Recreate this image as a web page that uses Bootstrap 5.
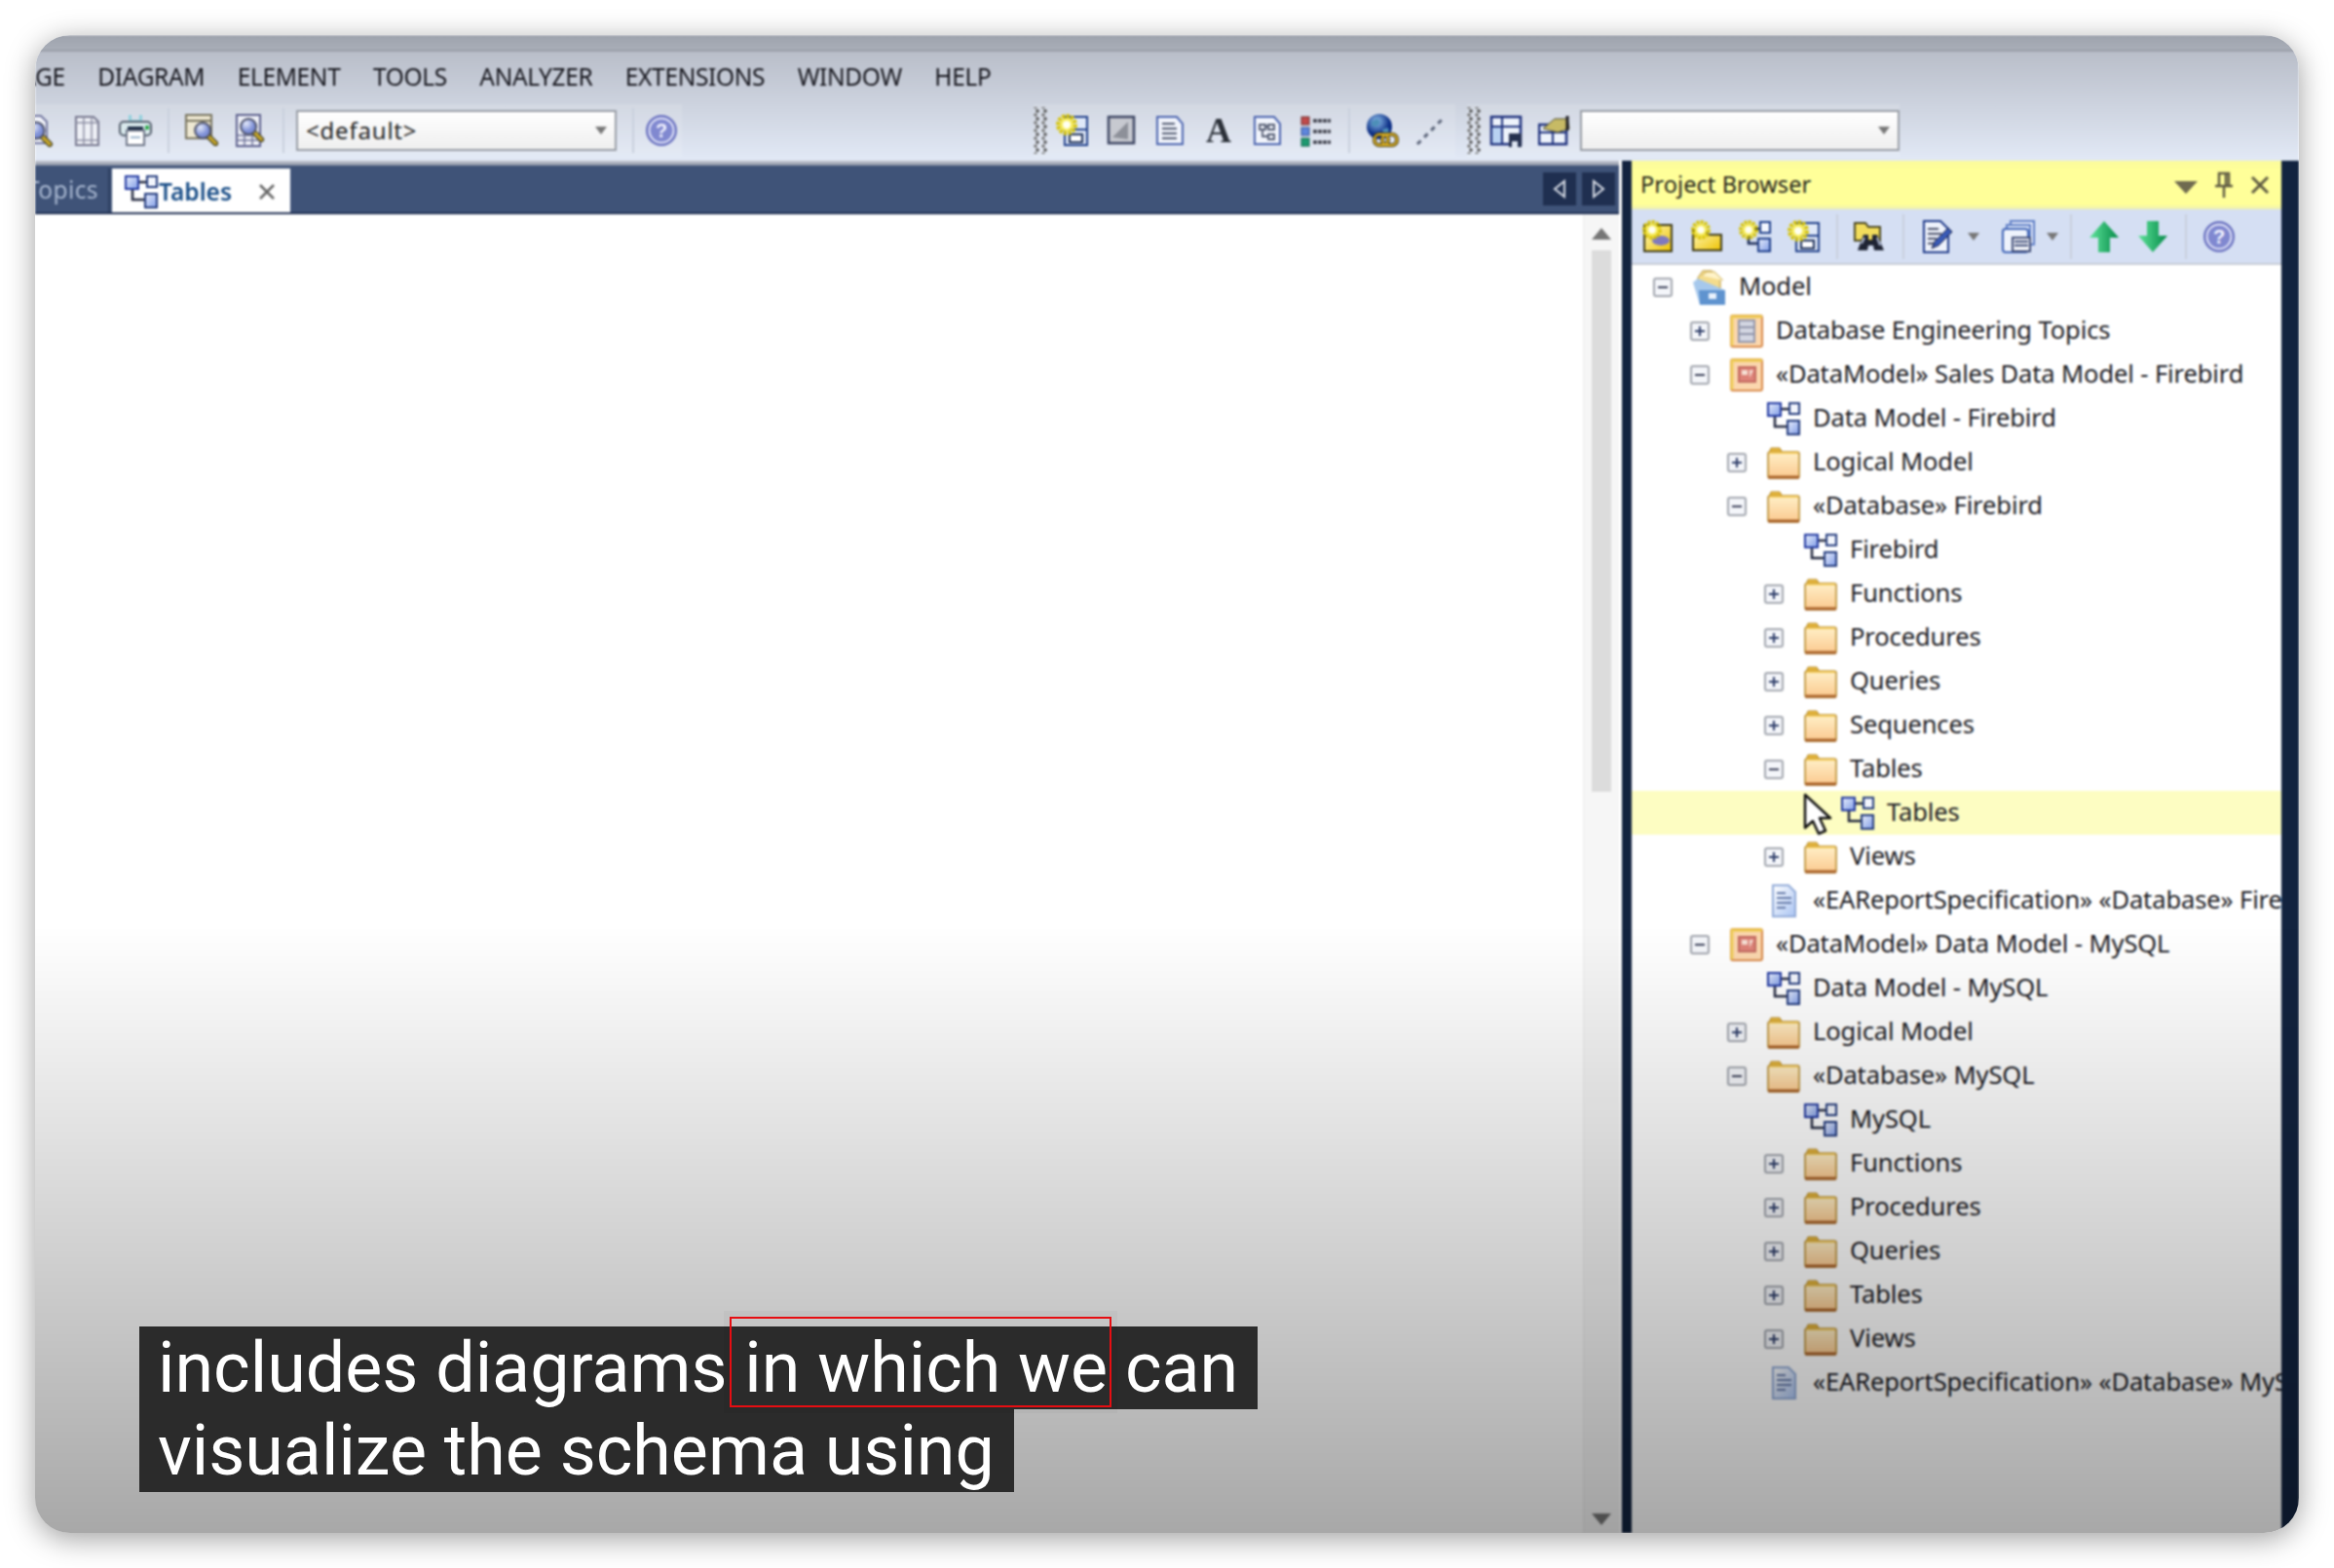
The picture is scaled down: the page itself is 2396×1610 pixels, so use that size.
<!DOCTYPE html>
<html lang="en">
<head>
  <meta charset="UTF-8">
  <title>Project Browser</title>
  <link href="https://cdn.jsdelivr.net/npm/bootstrap@5.3.2/dist/css/bootstrap.min.css" rel="stylesheet">
  <style>
    html, body { height: 1610px; background: #fff; overflow: hidden; }
    .shot-frame { padding: 36px; height: 1610px; }
    .app-window { width: 2324px; height: 1538px; border-radius: 36px; overflow: hidden; background: #fff;
      box-shadow: 0 6px 30px rgba(0,0,0,.38); }
    .app-ui { height: 100%; filter: blur(.8px); font-family: "Noto Sans", sans-serif; color: #1a1a22; }

    .title-strip { height: 17px; background: linear-gradient(#9ea3ad, #a9aeb8); border-bottom: 2px solid #9a9ea8; }
    .chrome { height: 112px; background: linear-gradient(#b9bec9, #e2e9f6); }
    .menu-row { height: 53px; gap: 33.5px; font-size: 24.5px; letter-spacing: -.35px; margin-left: -28px; color: #15151c; white-space: nowrap; overflow: hidden; }
    .tool-row { height: 55px; }
    .tb-band { gap: 16px; height: 54px; background: rgba(255,255,255,.12); }
    .tb-band1 { margin-left: -14px; padding-right: 4px; }
    .tb-band2 { margin-left: 361px; padding-right: 8px; }
    .tb-band3 { margin-left: 12px; }
    .tb-ico { width: 34px; height: 34px; flex: none; }
    .tb-sep { width: 2px; height: 46px; background: #c9d0dd; flex: none; }
    .tb-grip { width: 14px; height: 48px; flex: none; margin-right: -7px;
      background: radial-gradient(circle, #555 0 1.4px, transparent 2px) 0 0 / 8px 8px,
                  radial-gradient(circle, #777 0 1.4px, transparent 2px) 6px 4px / 8px 8px; }
    .tb-font { width: 34px; font: bold 36px/34px "Liberation Serif", serif; color: #2b3038; text-align: center; flex: none; }
    .tb-select { height: 42px; background: linear-gradient(#fff, #efefef); border: 2px solid #999ea6; flex: none;
      font-size: 24px; letter-spacing: .8px; padding: 0 8px; color: #222; }
    .tb-select-a { width: 329px; margin-left: -4px; }
    .tb-select-b { width: 328px; margin-left: -7px; }
    .tb-caret { width: 0; height: 0; border: 6px solid transparent; border-top: 8px solid #777; border-bottom: 0; }
    .help-shift { margin-left: -5px; }

    .work-row { height: 1409px; }
    .doc-col { width: 1626px; flex: none; }
    .top-line { height: 5px; background: linear-gradient(#c6cad2, #8a93a5); }
    .tab-bar { height: 50px; background: #3f5378; border-bottom: 2px solid #1e2e50; overflow: hidden; padding-top: 3px; }
    .doc-tab { font-size: 24.5px; height: 45px; line-height: 43px; white-space: nowrap; }
    .doc-tab-off { width: 77px; color: #a9b8d1; direction: rtl; overflow: hidden; padding-right: 10px; letter-spacing: .4px; border-right: 2px solid #2c3e60; }
    .doc-tab-on { width: 183px; background: #fff; color: #1b4f88; font-weight: 600; padding-left: 12px; margin-left: 2px; height: 47px; }
    .tab-x { color: #666; margin-left: 27px; width: 18px; height: 18px; }
    .nav-btn { width: 34px; height: 34px; background: #1f2f50; margin-top: 4px; }
    .nav-btn-l { margin-left: auto; }
    .nav-btn-r { margin-left: 6px; margin-right: 4px; }
    .nav-tri { width: 14px; height: 20px; }
    .doc-body { height: 1354px; }
    .scroll-bar { width: 37px; background: #f6f6f6; border-left: 1px solid #eee; padding-top: 14px; padding-bottom: 8px; }
    .scroll-up { border: 10px solid transparent; border-bottom: 12px solid #767676; border-top: 0; }
    .scroll-dn { border: 10px solid transparent; border-top: 12px solid #767676; border-bottom: 0; margin-top: auto; }
    .scroll-thumb { width: 20px; height: 556px; margin-top: 11px; background: #dcdcdc; }

    .panel-edge { background: #12233f; }
    .panel-edge-l { width: 10px; margin-left: 3px; }
    .panel-edge-r { width: 18px; }
    .browser-panel { width: 667px; flex: none; background: #fff; }
    .panel-head { height: 50px; background: linear-gradient(#fbfb9c, #ffff99 20%, #ffff99 90%, #ebeeb8); font-size: 23.5px; letter-spacing: .1px; padding-left: 9px; color: #25251a; }
    .head-tri { border: 12px solid transparent; border-top: 13px solid #6f6a50; border-bottom: 0; margin-left: auto; margin-top: 4px; }
    .head-pin { width: 24px; height: 28px; margin-left: 15px; }
    .head-x { width: 24px; height: 24px; margin-left: 13px; margin-right: 10px; }
    .panel-tools { height: 57px; gap: 16px; background: #d5dff3; border-bottom: 2px solid #c7ccd6; padding-left: 10px; }
    .tool-caret-a { margin-left: -1px; margin-right: 7px; }
    .tool-caret-b { margin-left: -4px; margin-right: -4px; }
    .tree-wrap { height: 1302px; overflow: hidden; }
    .tree-row { height: 45px; font-size: 25.5px; letter-spacing: -.1px; white-space: nowrap; padding-left: 22px; }
    .tree-row span { padding-bottom: 2px; }
    .tree-row-hot { background: #fdfdc2; }
    .tree-toggle { width: 20px; height: 20px; flex: none; margin-right: 20px; }
    .tree-ico { width: 36px; height: 36px; flex: none; margin-right: 12px; }
    .mouse-arrow { position: absolute; left: 176px; top: 542px; width: 32px; height: 44px; }

    .yt-fade { position: absolute; left: 0; right: 0; bottom: 0; height: 624px; pointer-events: none;
      background: linear-gradient(rgba(0,0,0,0), rgba(0,0,0,.34)); }
    .yt-caption { position: absolute; left: 107px; top: 1326px; font: 400 71.8px/85px Roboto, sans-serif; color: #fff; white-space: nowrap; }
    .yt-line { background: #2b2b2b; height: 85px; padding: 0 20px 0 19px; width: fit-content; }
    .red-box { position: relative; }
    .red-box::after { content: ""; position: absolute; left: -15px; right: -4px; top: -10px; bottom: 2px;
      border: 2px solid #e60d12; box-shadow: 0 0 0 6px rgba(0,0,0,.03); }
  </style>
</head>
<body>

<!-- Icons -->
<svg width="0" height="0" class="position-absolute">
  <defs>
    <linearGradient id="gBox" x1="0" y1="0" x2="1" y2="1"><stop offset="0" stop-color="#e8eefc"/><stop offset="1" stop-color="#7f9be6"/></linearGradient>
    <linearGradient id="gFolder" x1="0" y1="0" x2="0" y2="1"><stop offset="0" stop-color="#fff0c8"/><stop offset="1" stop-color="#fbc98f"/></linearGradient>
    <linearGradient id="gYellow" x1="0" y1="0" x2="1" y2="1"><stop offset="0" stop-color="#fff9c0"/><stop offset="1" stop-color="#eec300"/></linearGradient>
    <linearGradient id="gGreen" x1="0" y1="0" x2="1" y2="0"><stop offset="0" stop-color="#5fe39a"/><stop offset="1" stop-color="#048a48"/></linearGradient>
    <linearGradient id="gPage" x1="0" y1="0" x2="1" y2="1"><stop offset="0" stop-color="#fff"/><stop offset="1" stop-color="#a9c3f2"/></linearGradient>
    <radialGradient id="gLens" cx=".35" cy=".3"><stop offset="0" stop-color="#e4eafa"/><stop offset="1" stop-color="#7d8fd6"/></radialGradient>
    <radialGradient id="gGlobe" cx=".4" cy=".3"><stop offset="0" stop-color="#8fc2ee"/><stop offset="1" stop-color="#0d2f86"/></radialGradient>

    <symbol id="i-burst" viewBox="0 0 16 16">
      <circle cx="8" cy="8" r="6.200" fill="none" stroke="#d8c400" stroke-width="3.500" stroke-dasharray="2.200 1"/>
      <circle cx="8" cy="8" r="5" fill="#f7ec5a"/>
      <circle cx="8" cy="8" r="3" fill="#fffff0"/>
    </symbol>
    <symbol id="i-lens" viewBox="0 0 34 34">
      <path d="M21 23l8 8" stroke="#3d3a20" stroke-width="6" stroke-linecap="round"/>
      <path d="M21 23l8 8" stroke="#c9a92a" stroke-width="3.500" stroke-linecap="round"/>
      <circle cx="15" cy="17" r="8.500" fill="url(#gLens)" stroke="#4b4f66" stroke-width="2"/>
    </symbol>
    <symbol id="i-find-page" viewBox="0 0 34 34">
      <path d="M4 2h16l6 6v22H4z" fill="#f2f4fb" stroke="#7478a0" stroke-width="2"/>
      <use href="#i-lens" width="34" height="34"/>
    </symbol>
    <symbol id="i-columns" viewBox="0 0 34 34">
      <path d="M6 3h18l5 5v24H6z" fill="#eef0f6" stroke="#77788f" stroke-width="2"/>
      <path d="M14 3v29M22 3v29M6 9h23M6 27h23" stroke="#8c8da3" stroke-width="1.500" fill="none"/>
    </symbol>
    <symbol id="i-print" viewBox="0 0 34 34">
      <path d="M10 1h3v5h8V1h3v7H10z" fill="#8fd0dc"/>
      <rect x="1" y="8" width="32" height="14" rx="4" fill="#d9e9ec" stroke="#56606e" stroke-width="2"/>
      <rect x="9" y="13" width="16" height="4" fill="#15253d"/>
      <rect x="27" y="12" width="4" height="4" fill="#2ea84b"/>
      <rect x="8" y="17" width="18" height="15" fill="#fff" stroke="#6e7688" stroke-width="2"/>
      <path d="M12 24h10" stroke="#9cb4cc" stroke-width="2"/>
    </symbol>
    <symbol id="i-find-win" viewBox="0 0 34 34">
      <rect x="1" y="1" width="26" height="24" fill="#eee8d2" stroke="#77735e" stroke-width="2"/>
      <path d="M1 7h26" stroke="#77735e" stroke-width="2"/>
      <use href="#i-lens" x="4" y="1" width="32" height="32"/>
    </symbol>
    <symbol id="i-find-table" viewBox="0 0 34 34">
      <rect x="3" y="1" width="24" height="32" fill="#eef0f8" stroke="#5c5f8c" stroke-width="2"/>
      <path d="M3 22h24M3 27h24M11 20v13M19 20v13" stroke="#6e7196" stroke-width="1.500"/>
      <use href="#i-lens" x="1" y="-3" width="32" height="32"/>
    </symbol>
    <symbol id="i-help" viewBox="0 0 34 34">
      <circle cx="17" cy="17" r="16" fill="#6a72c0"/>
      <circle cx="17" cy="17" r="12.500" fill="#8088d0" stroke="#e4e7fa" stroke-width="2"/>
      <text x="17" y="24" text-anchor="middle" font-family="Liberation Sans, sans-serif" font-size="20" font-weight="700" fill="#f4f5ff">?</text>
    </symbol>
    <symbol id="i-new-element" viewBox="0 0 34 34">
      <rect x="9" y="3" width="23" height="29" fill="#dfe8f8" stroke="#1f3f8a" stroke-width="2"/>
      <path d="M9 16h23" stroke="#1f3f8a" stroke-width="2"/>
      <path d="M14 21h13v8H14z" fill="#fff" stroke="#1b2d57" stroke-width="2"/>
      <use href="#i-burst" x="0" y="0" width="22" height="22"/>
    </symbol>
    <symbol id="i-gradient" viewBox="0 0 34 34">
      <rect x="4" y="3" width="26" height="27" fill="#c7c9d0" stroke="#3d4663" stroke-width="2.500"/>
      <path d="M8 24l16-16v18z" fill="#666a75" opacity=".6"/>
    </symbol>
    <symbol id="i-note" viewBox="0 0 34 34">
      <path d="M4 3h20l6 7v21H4z" fill="#f1f4fc" stroke="#4a63ae" stroke-width="2"/>
      <path d="M9 10h13M9 15h15M9 20h15M9 25h15" stroke="#50586e" stroke-width="2"/>
    </symbol>
    <symbol id="i-flow-note" viewBox="0 0 34 34">
      <path d="M4 3h20l6 7v21H4z" fill="#f1f4fc" stroke="#4a63ae" stroke-width="2"/>
      <path d="M9 11h6v5H9zM18 11h6v5h-6zM18 21h6v5h-6zM12 16v7h6M15 13h3" fill="none" stroke="#50586e" stroke-width="1.800"/>
    </symbol>
    <symbol id="i-list" viewBox="0 0 34 34">
      <rect x="2" y="3" width="8" height="8" fill="#c14a4a" stroke="#6d2b2b"/>
      <rect x="2" y="14" width="8" height="8" fill="#5f86dd" stroke="#33508f"/>
      <rect x="2" y="25" width="8" height="8" fill="#1d9a70" stroke="#12654a"/>
      <path d="M14 7h18M14 18h18M14 29h18" stroke="#40424d" stroke-width="3.500" stroke-dasharray="4 1"/>
    </symbol>
    <symbol id="i-globe" viewBox="0 0 34 34">
      <circle cx="14" cy="13" r="13" fill="url(#gGlobe)"/>
      <path d="M6 8l6-3 3 4-4 4-5-1zM17 16l6-2 1 6-5 2z" fill="#4d8fb8"/>
      <rect x="9" y="21" width="14" height="11" rx="5" fill="none" stroke="#3f3205" stroke-width="4"/>
      <rect x="17" y="21" width="15" height="11" rx="5" fill="none" stroke="#3f3205" stroke-width="4"/>
      <rect x="9" y="21" width="14" height="11" rx="5" fill="none" stroke="#e5b92a" stroke-width="2"/>
      <rect x="17" y="21" width="15" height="11" rx="5" fill="none" stroke="#e5b92a" stroke-width="2"/>
    </symbol>
    <symbol id="i-dash-line" viewBox="0 0 34 34">
      <path d="M3 31L31 3" stroke="#5a6378" stroke-width="3" stroke-dasharray="5 5"/>
    </symbol>
    <symbol id="i-layout-save" viewBox="0 0 34 34">
      <path d="M2 3h30v28H2z" fill="#eef3fc" stroke="#1c2f7c" stroke-width="2.500"/>
      <path d="M13 3v10H2M13 13v18M13 13h19" stroke="#1c2f7c" stroke-width="2" fill="none"/>
      <rect x="3" y="14" width="9" height="16" fill="#b9d2f2"/>
      <path d="M20 20h13v14H20z" fill="#25304f"/>
      <rect x="23" y="28" width="6" height="6" fill="#dfe6f2"/>
    </symbol>
    <symbol id="i-layout-pick" viewBox="0 0 34 34">
      <path d="M1 11h28v20H1z" fill="#eef3fc" stroke="#1c2f7c" stroke-width="2.500"/>
      <path d="M15 11v20M1 19h28" stroke="#1c2f7c" stroke-width="2"/>
      <path d="M5 15L17 5h13l2 10-12 4z" fill="#c7ba65" stroke="#4d4d33"/>
      <path d="M30 2v15" stroke="#1b1b20" stroke-width="3"/>
    </symbol>
    <symbol id="i-new-model" viewBox="0 0 34 34">
      <rect x="3" y="5" width="28" height="27" fill="url(#gYellow)" stroke="#3e3a18" stroke-width="2"/>
      <ellipse cx="20" cy="21" rx="9" ry="5" fill="#7f79bf"/>
      <use href="#i-burst" x="1" y="0" width="20" height="20"/>
    </symbol>
    <symbol id="i-new-folder" viewBox="0 0 34 34">
      <path d="M3 10h12l3 5h14v16H3z" fill="url(#gYellow)" stroke="#3e3a18" stroke-width="2"/>
      <use href="#i-burst" x="1" y="0" width="20" height="20"/>
    </symbol>
    <symbol id="i-new-diagram" viewBox="0 0 34 34">
      <path d="M10 10v14h11M14 9h10" stroke="#1a2a55" stroke-width="2.500" fill="none"/>
      <rect x="22" y="2" width="10" height="11" fill="#f4f7ff" stroke="#1f3f8a" stroke-width="2"/>
      <rect x="20" y="19" width="12" height="13" fill="url(#gBox)" stroke="#1f3f8a" stroke-width="2"/>
      <use href="#i-burst" x="0" y="0" width="20" height="20"/>
    </symbol>
    <symbol id="i-binoculars" viewBox="0 0 34 34">
      <path d="M1 3h11l3 4h12v14H1z" fill="#f2dd5c" stroke="#4a4620" stroke-width="2"/>
      <path d="M10 15h5v6h4v-6h5l7 16h-10l-1-5h-5l-1 5H4z" fill="#1e2333"/>
      <path d="M8 24l3-6M24 18l3 8" stroke="#b8c3dd" stroke-width="2"/>
    </symbol>
    <symbol id="i-edit-doc" viewBox="0 0 34 34">
      <path d="M4 1h17l8 8v24H4z" fill="#eef2fb" stroke="#1f3a8a" stroke-width="2"/>
      <path d="M8 9h11M8 14h14M8 19h9M8 24h6" stroke="#4a5068" stroke-width="2"/>
      <path d="M12 29l3-7L29 8l4 4-14 14z" fill="#395bb8" stroke="#12183a"/>
    </symbol>
    <symbol id="i-stack" viewBox="0 0 34 34">
      <rect x="9" y="1" width="24" height="24" fill="#e8eefb" stroke="#5c7cc4" stroke-width="2"/>
      <rect x="5" y="5" width="24" height="24" fill="#dbe5f8" stroke="#5c7cc4" stroke-width="2"/>
      <rect x="1" y="9" width="26" height="24" rx="3" fill="#eef3fc" stroke="#3d62b5" stroke-width="2"/>
      <path d="M11 18h18v14H11z" fill="#f4f6fb" stroke="#3d4a75" stroke-width="2"/>
      <path d="M13 22h14M13 26h14" stroke="#3d4a75" stroke-width="2"/>
    </symbol>
    <symbol id="i-up" viewBox="0 0 34 34">
      <path d="M17 1l15 17H23v15H11V18H2z" fill="url(#gGreen)"/>
    </symbol>
    <symbol id="i-down" viewBox="0 0 34 34">
      <path d="M17 33L32 16H23V1H11v15H2z" fill="url(#gGreen)"/>
    </symbol>

    <symbol id="t-plus" viewBox="0 0 20 20">
      <rect x="1" y="1" width="18" height="18" rx="2" fill="#f4f6fa" stroke="#a2a6ae" stroke-width="2"/>
      <path d="M5 10h10M10 5v10" stroke="#2a3a66" stroke-width="2"/>
    </symbol>
    <symbol id="t-minus" viewBox="0 0 20 20">
      <rect x="1" y="1" width="18" height="18" rx="2" fill="#f4f6fa" stroke="#a2a6ae" stroke-width="2"/>
      <path d="M5 10h10" stroke="#3a3f58" stroke-width="2"/>
    </symbol>
    <symbol id="n-model" viewBox="0 0 36 36">
      <path d="M6 8l5-7h9l9 8v10H6z" fill="#f4dc8c" stroke="#b8953a"/>
      <path d="M10 6l5-4h8l9 9" fill="#fff3c8" stroke="#c9a94a"/>
      <path d="M1 13l5-4 28 12v15H8z" fill="#a6c8ec"/>
      <path d="M7 21h27v15H8z" fill="#5f93cf"/>
      <rect x="17" y="24" width="8" height="6" fill="#eaf2fc"/>
    </symbol>
    <symbol id="n-topic" viewBox="0 0 36 36">
      <rect x="2" y="2" width="32" height="32" rx="2" fill="#fbd7ae" stroke="#d98a4a" stroke-width="2"/>
      <path d="M2 3h32" stroke="#ecc94c" stroke-width="3"/>
      <path d="M3 3v30" stroke="#f0cf5c" stroke-width="3"/>
      <rect x="10" y="7" width="16" height="22" fill="#d3d6e2" stroke="#9195aa" stroke-width="2"/>
      <path d="M10 14h16M10 21h16" stroke="#9195aa" stroke-width="2"/>
    </symbol>
    <symbol id="n-dm" viewBox="0 0 36 36">
      <rect x="2" y="2" width="32" height="32" rx="2" fill="#fbd7ae" stroke="#d98a4a" stroke-width="2"/>
      <path d="M2 3h32" stroke="#ecc94c" stroke-width="3"/>
      <path d="M3 3v30" stroke="#f0cf5c" stroke-width="3"/>
      <rect x="10" y="10" width="17" height="15" fill="#dd8278" stroke="#c26a60" stroke-width="2"/>
      <path d="M13 13h6v5h-6zM21 13l4 0-4 8z" fill="#f5dfd4"/>
    </symbol>
    <symbol id="n-diagram" viewBox="0 0 36 36">
      <path d="M9 12v14h15M12 8h12" stroke="#23283f" stroke-width="2.500" fill="none"/>
      <rect x="2" y="2" width="13" height="13" fill="url(#gBox)" stroke="#2138a0" stroke-width="2"/>
      <rect x="24" y="2" width="10" height="11" fill="#f3f6fd" stroke="#223a7c" stroke-width="2"/>
      <rect x="22" y="20" width="12" height="14" fill="url(#gBox)" stroke="#223a7c" stroke-width="2"/>
    </symbol>
    <symbol id="n-folder" viewBox="0 0 36 36">
      <path d="M3 8l2-5h9l3 5" fill="#e9b93c" stroke="#b5892a"/>
      <rect x="2" y="7" width="32" height="27" rx="2" fill="url(#gFolder)" stroke="#b5892a" stroke-width="1.500"/>
      <path d="M2 33h32" stroke="#a8622a" stroke-width="3"/>
      <path d="M3 8h30" stroke="#f2c95c" stroke-width="2"/>
    </symbol>
    <symbol id="n-report" viewBox="0 0 36 36">
      <path d="M7 2h16l7 7v25H7z" fill="url(#gPage)" stroke="#92abd8" stroke-width="2"/>
      <path d="M11 10h9M11 15h15M11 20h15M11 25h9" stroke="#667aa8" stroke-width="1.800"/>
    </symbol>
  </defs>
</svg>

<div class="shot-frame">
  <div class="app-window position-relative">
    <div class="app-ui d-flex flex-column">

      <div class="title-strip"></div>

      <!-- Menu and main toolbar -->
      <div class="chrome">
        <div class="menu-row d-flex align-items-center">
          <span>PAGE</span><span>DIAGRAM</span><span>ELEMENT</span><span>TOOLS</span><span>ANALYZER</span><span>EXTENSIONS</span><span>WINDOW</span><span>HELP</span>
        </div>
        <div class="tool-row d-flex align-items-center">
          <div class="tb-band tb-band1 d-flex align-items-center">
            <svg class="tb-ico"><use href="#i-find-page"/></svg>
            <svg class="tb-ico"><use href="#i-columns"/></svg>
            <svg class="tb-ico"><use href="#i-print"/></svg>
            <div class="tb-sep"></div>
            <svg class="tb-ico"><use href="#i-find-win"/></svg>
            <svg class="tb-ico"><use href="#i-find-table"/></svg>
            <div class="tb-sep"></div>
            <div class="tb-select tb-select-a d-flex align-items-center justify-content-between"><span>&lt;default&gt;</span><span class="tb-caret"></span></div>
            <div class="tb-sep"></div>
            <svg class="tb-ico help-shift"><use href="#i-help"/></svg>
          </div>
          <div class="tb-band tb-band2 d-flex align-items-center">
            <div class="tb-grip"></div>
            <svg class="tb-ico"><use href="#i-new-element"/></svg>
            <svg class="tb-ico"><use href="#i-gradient"/></svg>
            <svg class="tb-ico"><use href="#i-note"/></svg>
            <span class="tb-font">A</span>
            <svg class="tb-ico"><use href="#i-flow-note"/></svg>
            <svg class="tb-ico"><use href="#i-list"/></svg>
            <div class="tb-sep"></div>
            <svg class="tb-ico"><use href="#i-globe"/></svg>
            <svg class="tb-ico"><use href="#i-dash-line"/></svg>
          </div>
          <div class="tb-band tb-band3 d-flex align-items-center">
            <div class="tb-grip"></div>
            <svg class="tb-ico"><use href="#i-layout-save"/></svg>
            <svg class="tb-ico"><use href="#i-layout-pick"/></svg>
            <div class="tb-select tb-select-b d-flex align-items-center justify-content-end"><span class="tb-caret"></span></div>
          </div>
        </div>
      </div>

      <div class="work-row d-flex">
        <!-- Document area -->
        <div class="doc-col d-flex flex-column">
          <div class="top-line"></div>
          <div class="tab-bar d-flex">
            <div class="doc-tab doc-tab-off">Topics</div>
            <div class="doc-tab doc-tab-on d-flex align-items-center">
              <svg class="tree-ico me-0"><use href="#n-diagram"/></svg>
              <span>Tables</span>
              <svg class="tab-x" viewBox="0 0 18 18"><path d="M2 2l14 14M16 2L2 16" stroke="currentColor" stroke-width="2.500"/></svg>
            </div>
            <div class="nav-btn nav-btn-l d-flex align-items-center justify-content-center">
              <svg class="nav-tri" viewBox="0 0 14 20"><path d="M12 2v16L2 10z" fill="none" stroke="#d7dce6" stroke-width="2"/></svg>
            </div>
            <div class="nav-btn nav-btn-r d-flex align-items-center justify-content-center">
              <svg class="nav-tri" viewBox="0 0 14 20"><path d="M2 2v16l10-8z" fill="none" stroke="#d7dce6" stroke-width="2"/></svg>
            </div>
          </div>
          <div class="doc-body d-flex justify-content-end">
            <div class="scroll-bar d-flex flex-column align-items-center">
              <span class="scroll-up"></span>
              <div class="scroll-thumb"></div>
              <span class="scroll-dn"></span>
            </div>
          </div>
        </div>

        <div class="panel-edge panel-edge-l"></div>

        <!-- Project browser -->
        <div class="browser-panel d-flex flex-column">
          <div class="panel-head d-flex align-items-center">
            <span>Project Browser</span>
            <span class="head-tri"></span>
            <svg class="head-pin" viewBox="0 0 24 28"><path d="M7 2h10v13H7zM3 15h18M12 15v12M14 3v11" stroke="#5f5b42" stroke-width="2.500" fill="none"/></svg>
            <svg class="head-x" viewBox="0 0 24 24"><path d="M4 4l16 16M20 4L4 20" stroke="#5f5b42" stroke-width="3"/></svg>
          </div>
          <div class="panel-tools d-flex align-items-center">
            <svg class="tb-ico"><use href="#i-new-model"/></svg>
            <svg class="tb-ico"><use href="#i-new-folder"/></svg>
            <svg class="tb-ico"><use href="#i-new-diagram"/></svg>
            <svg class="tb-ico"><use href="#i-new-element"/></svg>
            <div class="tb-sep"></div>
            <svg class="tb-ico"><use href="#i-binoculars"/></svg>
            <div class="tb-sep"></div>
            <svg class="tb-ico"><use href="#i-edit-doc"/></svg>
            <span class="tb-caret tool-caret-a"></span>
            <svg class="tb-ico"><use href="#i-stack"/></svg>
            <span class="tb-caret tool-caret-b"></span>
            <div class="tb-sep"></div>
            <svg class="tb-ico"><use href="#i-up"/></svg>
            <svg class="tb-ico"><use href="#i-down"/></svg>
            <div class="tb-sep"></div>
            <svg class="tb-ico"><use href="#i-help"/></svg>
          </div>
          <div id="projectTree" class="tree-wrap position-relative"></div>
        </div>

        <div class="panel-edge panel-edge-r"></div>
      </div>
    </div>

    <!-- Video caption -->
    <div class="yt-fade"></div>
    <div class="yt-caption">
      <div class="yt-line">includes diagrams <span class="red-box">in which we</span> can</div>
      <div class="yt-line">visualize the schema using</div>
    </div>
  </div>
</div>

<script src="https://cdn.jsdelivr.net/npm/bootstrap@5.3.2/dist/js/bootstrap.bundle.min.js"></script>
<script>
  // depth, toggle, icon, label
  const treeRows = [
    [0, "minus", "model", "Model"],
    [1, "plus", "topic", "Database Engineering Topics"],
    [1, "minus", "dm", "«DataModel» Sales Data Model - Firebird"],
    [2, "", "diagram", "Data Model - Firebird"],
    [2, "plus", "folder", "Logical Model"],
    [2, "minus", "folder", "«Database» Firebird"],
    [3, "", "diagram", "Firebird"],
    [3, "plus", "folder", "Functions"],
    [3, "plus", "folder", "Procedures"],
    [3, "plus", "folder", "Queries"],
    [3, "plus", "folder", "Sequences"],
    [3, "minus", "folder", "Tables"],
    [4, "", "diagram", "Tables", true],
    [3, "plus", "folder", "Views"],
    [2, "", "report", "«EAReportSpecification» «Database» Firebird"],
    [1, "minus", "dm", "«DataModel» Data Model - MySQL"],
    [2, "", "diagram", "Data Model - MySQL"],
    [2, "plus", "folder", "Logical Model"],
    [2, "minus", "folder", "«Database» MySQL"],
    [3, "", "diagram", "MySQL"],
    [3, "plus", "folder", "Functions"],
    [3, "plus", "folder", "Procedures"],
    [3, "plus", "folder", "Queries"],
    [3, "plus", "folder", "Tables"],
    [3, "plus", "folder", "Views"],
    [2, "", "report", "«EAReportSpecification» «Database» MySQL"]
  ];

  const tree = document.getElementById("projectTree");
  tree.innerHTML = treeRows.map(([depth, toggle, icon, label, hot]) => `
    <div class="tree-row d-flex align-items-center overflow-hidden ${hot ? "tree-row-hot" : ""}">
      <svg class="tree-toggle" style="margin-left:${depth * 38}px">${toggle ? `<use href="#t-${toggle}"/>` : ""}</svg>
      <svg class="tree-ico"><use href="#n-${icon}"/></svg>
      <span>${label}</span>
    </div>`).join("") + `
    <svg class="mouse-arrow" viewBox="0 0 32 44">
      <path d="M2 2v34l8-7 6 13 7-3-6-13h11z" fill="#fff" stroke="#111" stroke-width="2.500" stroke-linejoin="round"/>
    </svg>`;
</script>
</body>
</html>
